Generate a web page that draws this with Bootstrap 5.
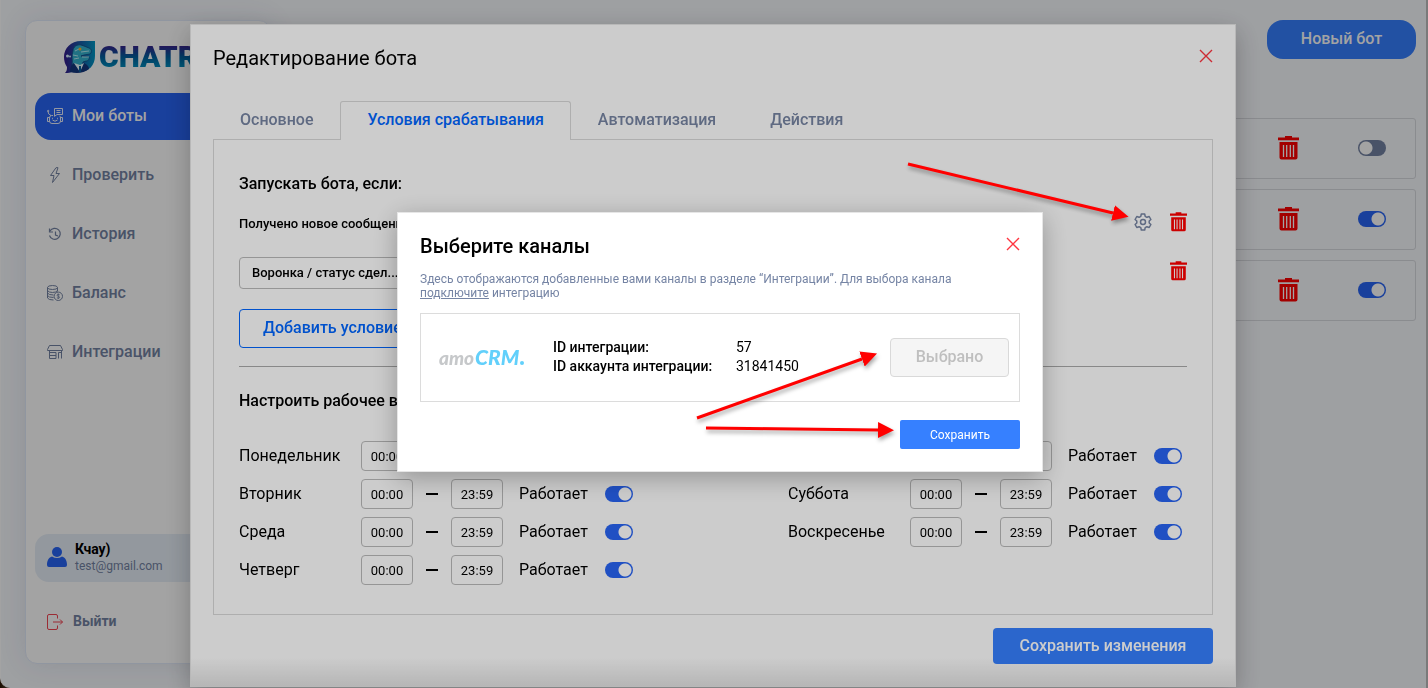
<!DOCTYPE html>
<html lang="ru">
<head>
<meta charset="utf-8">
<meta name="viewport" content="width=device-width, initial-scale=1">
<title>Редактирование бота</title>
<link rel="stylesheet" href="https://cdn.jsdelivr.net/npm/bootstrap@5.3.0/dist/css/bootstrap.min.css">
<style>
:root{--accent:#3680ff;--strong:#0066ff;--navy:#2864f4;--muted:#7483a3;--danger:#ff3540}
body{font-family:Roboto,"Liberation Sans",sans-serif;color:#000;background:#c0c0c0;overflow:hidden}
.shell{min-height:100vh;margin-right:2px;background:#f8fafe;position:relative;border-bottom-left-radius:10px;border-left:1px solid #fff;padding:20px 10px 24px 24px}
.frame-corner{background:linear-gradient(90deg,#2a1400,#c0c0c0 30px)}
.side{width:246px;min-height:644px;background:#fff;border:1px solid #e3ebfa;border-radius:12px;padding:0 9px;box-shadow:0 0 28px rgba(60,80,120,.12)}
.brand{height:72px;padding-left:28px;gap:3px}
.brand-name{font-weight:900;font-size:30px;line-height:34px;background:linear-gradient(#3a1f8c 15%,#00609f 50%,#0099c4 90%);-webkit-background-clip:text;background-clip:text;color:transparent}
.side-link{display:flex;align-items:center;gap:9px;height:47px;padding:0 12px 2px;border-radius:16px;color:var(--muted);font-weight:500;text-decoration:none}
.side-link svg,.leave svg{width:16px;height:16px;flex:none}
.side-link.active{background:var(--navy);color:#fff}
.side-nav{gap:12px}
.user-box{height:48px;border-radius:14px;background:#e7eff8;padding:0 12px 2px;gap:8px}
.user-name{font-size:14px;line-height:18px;font-weight:700}
.user-mail{font-size:12px;line-height:16px;color:var(--muted)}
.leave{height:47px;padding:0 12px;margin:16px 0 18px;gap:10px;font-size:14px;font-weight:700;color:var(--muted);text-decoration:none}
.new-bot{height:39px;width:149px;border-radius:16px;background:var(--accent);color:#fff;font-weight:500;padding:0 0 2px}
.bot-list{gap:10px;margin-top:59px}
.bot-row{height:61px;border:1px solid #d9dbe0;border-radius:3px;padding:0 29px 2px;gap:59px}
.veil{position:fixed;inset:0;background:rgba(0,0,0,.2)}
.win{background:#fff;border:1px solid #e6e6e6;padding:21px 22px 22px}
.win-edit{width:1046px;margin-top:24px;background:linear-gradient(to top,#e4e4e4,#fff 28px);box-shadow:0 8px 24px rgba(0,0,0,.25)}
.win-pick{width:646px;box-shadow:0 6px 24px rgba(0,0,0,.28)}
.veil-edit{padding-right:2px}
.veil-pick{padding:0 0 4px 12px}
.win-title{font-size:20px;line-height:24px;margin:0;font-weight:400}
.win-title.strong,.sub{font-weight:500}
.x-btn{border:0;background:none;padding:3px 0 0;line-height:0;color:var(--danger)}
.tabs{margin-top:31px}
.tab{border:1px solid transparent;border-bottom:0;background:none;height:39px;padding:0 26px 2px;font-weight:500;color:#7785a3;border-radius:3px 3px 0 0}
.tab.active{border-color:#dadada;color:var(--strong);background:#fff;position:relative}
.pane{border:1px solid #dadada;margin-top:-1px;padding:32px 25px 29px}
.sub{font-size:16px;line-height:24px;margin:0}
.cond{height:32px;margin-top:12px;font-size:13px;font-weight:500}
.cond-next{margin-top:17px}
.tools{gap:18px}
.pick{height:32px;width:190px;border:1px solid #bbb;border-radius:4px;background:#fff;padding:0 12px;appearance:none;font-size:13px;font-weight:500;color:#000}
.ico-btn{border:0;background:none;padding:0;line-height:0;color:#f00}
.pane .ico-btn{padding-bottom:4px}
.add-btn{height:39px;width:190px;margin-top:20px;border:1px solid var(--strong);border-radius:4px;background:#fff;color:var(--strong);font-weight:500;padding:0 23px 2px;white-space:nowrap;text-align:left}
.split{border:0;border-top:1px solid #aaa;margin:18px 0 22px;opacity:1;background:none}
.days{display:grid;grid-template-columns:1fr 399px;margin-top:28px}
.day{display:flex;align-items:center;height:30px;margin-bottom:8px}
.day:last-child{margin-bottom:0}
.day label.name{width:122px;line-height:24px}
.time{width:52px;height:30px;border:1px solid #bbb;border-radius:4px;text-align:center;font-size:13px;padding:0;background:#fff;color:#000}
.dash{width:12px;height:2px;background:#000;margin:0 13px}
.works{width:86px;margin-left:16px;line-height:24px}
.tgl{appearance:none;width:28px;height:16px;border-radius:8px;margin:0;flex:none;background:radial-gradient(circle at 20px 8px,#fff 6px,transparent 7px) var(--navy)}
.tgl:not(:checked){background:radial-gradient(circle at 8px 8px,#fff 6px,transparent 7px) var(--muted)}
.save-all{height:36px;width:220px;margin-top:13px;background:var(--accent);color:#fff;font-weight:500;border-radius:4px;padding:0}
.hint{font-size:12px;line-height:14px;color:#7584a4;margin:14px 0 13px}
.hint a{color:inherit}
.channel{border:1px solid #dcdcdc;height:89px;padding:0 10px 0 18px}
.amo{width:114px;height:36px;flex:none}
.amo text{font-family:Lato,sans-serif;font-weight:900;font-style:italic}
.ids{display:grid;grid-template-columns:183px auto;font-size:14px;line-height:19px;margin:0;padding-bottom:2px}
.ids dt{font-weight:500}
.ids dd{margin:0}
.chosen{width:119px;height:39px;border:1px solid #d9d9d9;border-radius:4px;background:#f5f5f5;color:#bfbfbf;font-weight:500;padding:0 0 2px}
.save-pick{width:120px;height:29px;margin-top:18px;border:0;border-radius:2px;background:var(--accent);color:#fff;font-size:12px;padding:0}
.notes{position:fixed;inset:0;width:100%;height:100%;pointer-events:none;filter:drop-shadow(1px 3px 2px rgba(0,0,0,.35))}
</style>
</head>
<body>
<svg width="0" height="0" class="position-absolute">
<defs>
<symbol id="trash" viewBox="0 0 21 24"><path fill="currentColor" d="M7 0h7v1.500h7v2.800H0V1.500h7zM1.500 6h18v15.500a2 2 0 0 1-2 2h-14a2 2 0 0 1-2-2z"/><path d="M5.500 9v12M8.700 9v12M12.300 9v12M15.500 9v12" stroke="#fff" stroke-width="1.300"/></symbol>
<symbol id="cross" viewBox="0 0 14 14"><path d="M1 1l12 12M13 1L1 13" stroke="currentColor" stroke-width="1.400" fill="none"/></symbol>
</defs>
</svg>
<div class="frame-corner">
<div class="shell d-flex justify-content-between align-items-start">
<aside class="side d-flex flex-column">
<div class="brand d-flex align-items-center">
<svg width="33" height="34" viewBox="0 0 33 34"><defs><linearGradient id="lg" x1="0" x2="1"><stop offset="0" stop-color="#351a8c"/><stop offset="1" stop-color="#0098c6"/></linearGradient></defs><path fill="url(#lg)" d="M18 1h14v15c0 9-6 16-16 16-3 0-5 0-6-1-2 2-5 2-8 2 2-2 2-4 2-6C2 24 1 21 1 17 1 8 8 1 18 1z"/><path fill="#35b3d0" stroke="#144a86" stroke-width=".8" d="M10 11c0-4 4-7 8-6l3 1 5 2c3 1 3 4 1 6l-6 1-3 1 8 1c1 2-1 4-3 4l-3 1-1 4H9c1-5-1-10 1-15z"/><path d="M12 11l4-2M10 15l5 1M11 19l5-1M18 12l8-1M19 17h7" stroke="#b5eef5" stroke-width="1"/><circle cx="17" cy="9" r="1.500" fill="#ffb52b"/><path fill="#15377f" d="M7 32c0-5 2-8 4-9l6 9 4-9c4 2 5 4 5 6-5 4-12 5-19 3z"/><path fill="#e9fbff" d="M11 23l6 9 4-9-4 2z"/><path d="M17 26v6" stroke="#075f9c" stroke-width="2"/><circle cx="4.500" cy="16" r="1.500" fill="#d9f4ff"/><circle cx="7" cy="16.500" r="1" fill="#d9f4ff"/></svg>
<span class="brand-name">CHATR</span>
</div>
<nav class="side-nav d-flex flex-column">
<a class="side-link active" href="#"><svg viewBox="0 0 16 16" fill="none" stroke="currentColor" stroke-width=".9"><path d="M7.500 6V.5h8v6H10L7.500 8.300zM9.500 2.500h4M9.500 4.500h4M6 7.500H4.500q-2 0-2 2.500v3q0 2.500 2.500 2.500h6q2.500 0 2.500-2.500v-3q0-1.500-1-2.200M2.500 9.500h-2v4h2M13.500 9.500h2v4h-2M1 3.500q0 3 3 4M5.500 12q2.500 2.500 5 0M5.500 9.800v1M10.500 9.800v1"/><circle cx="1.200" cy="3" r=".7"/></svg>Мои боты</a>
<a class="side-link" href="#"><svg viewBox="0 0 16 16" fill="none" stroke="currentColor" stroke-linejoin="round"><path d="M9 .7L3.500 8.500H7l-1.500 7L12.500 6.500H9L11 .7z"/></svg>Проверить</a>
<a class="side-link" href="#"><svg viewBox="0 0 16 16" fill="none" stroke="currentColor" stroke-width="1.200"><path d="M3 5a5.500 5.500 0 1 1-.5 4.500M2.500 2.500V6H6M8.500 5.500V9l2.500 1"/></svg>История</a>
<a class="side-link" href="#"><svg viewBox="0 0 16 16" fill="none" stroke="currentColor"><ellipse cx="5.500" cy="2.500" rx="5" ry="2"/><path d="M.5 2.500v10.500q1 2 6 2M10.500 2.500v4M.5 5.500q1 2 5 2t5-2M.5 8q1 2 6 2M.5 10.500q1 2 6 2"/><circle cx="11.300" cy="11.300" r="4.200"/><path d="M12.700 9.800q-2.500-1.300-2.700.3 0 .8 1.300 1.200 1.500.4 1.300 1.300-.4 1.300-2.700.2M11.300 8.500v5.500" stroke-width=".8"/></svg>Баланс</a>
<a class="side-link" href="#"><svg viewBox="0 0 16 16" fill="none" stroke="currentColor"><path d="M2.500 1.500h11l2 4v1H.5v-1zM2.500 7v7.500H9V8.500H2.500M14.500 7v7.500M11.500 14.500v-6h3M2.500 11.500H9"/></svg>Интеграции</a>
</nav>
<div class="mt-auto">
<div class="user-box d-flex align-items-center">
<svg width="20" height="20" viewBox="0 0 20 20" fill="#2864f4"><circle cx="10" cy="5" r="5"/><path d="M0 18c0-5 2-7.500 5-8.500q5 3 10 0c3 1 5 3.500 5 8.500q0 2-2 2H2q-2 0-2-2z"/></svg>
<div><div class="user-name">Кчау)</div><div class="user-mail">test@gmail.com</div></div>
</div>
<a class="leave d-flex align-items-center" href="#"><svg viewBox="0 0 16 16" fill="none" stroke="#f34553"><path d="M10.500 4.500V2q0-1.500-1.500-1.500H2Q.5.500.5 2v12q0 1.500 1.500 1.500h7q1.500 0 1.500-1.500v-2.500M6 8h9.500M13 5.500L15.500 8 13 10.500"/></svg>Выйти</a>
</div>
</aside>
<main class="d-flex flex-column align-items-end flex-grow-1 ps-4">
<button type="button" class="btn new-bot">Новый бот</button>
<div class="bot-list w-100 d-flex flex-column">
<div class="bot-row d-flex align-items-center justify-content-end"><button type="button" class="ico-btn" aria-label="Удалить"><svg width="21" height="24"><use href="#trash"/></svg></button><input type="checkbox" class="tgl" aria-label="Бот 1"></div>
<div class="bot-row d-flex align-items-center justify-content-end"><button type="button" class="ico-btn" aria-label="Удалить"><svg width="21" height="24"><use href="#trash"/></svg></button><input type="checkbox" class="tgl" aria-label="Бот 2" checked></div>
<div class="bot-row d-flex align-items-center justify-content-end"><button type="button" class="ico-btn" aria-label="Удалить"><svg width="21" height="24"><use href="#trash"/></svg></button><input type="checkbox" class="tgl" aria-label="Бот 3" checked></div>
</div>
</main>
</div>
</div>

<div class="veil veil-edit d-flex justify-content-center align-items-start">
<section class="win win-edit" role="dialog" aria-label="Редактирование бота">
<header class="d-flex justify-content-between align-items-start">
<h1 class="win-title">Редактирование бота</h1>
<button type="button" class="x-btn" aria-label="Закрыть"><svg width="14" height="14"><use href="#cross"/></svg></button>
</header>
<div class="tabs d-flex" role="tablist">
<button type="button" role="tab" class="tab">Основное</button>
<button type="button" role="tab" class="tab active">Условия срабатывания</button>
<button type="button" role="tab" class="tab">Автоматизация</button>
<button type="button" role="tab" class="tab">Действия</button>
</div>
<div class="pane">
<h2 class="sub">Запускать бота, если:</h2>
<div class="cond d-flex align-items-center justify-content-between">
<span>Получено новое сообщение</span>
<span class="tools d-flex align-items-center">
<button type="button" class="ico-btn" aria-label="Настройки"><svg width="18" height="18" viewBox="0 0 18 18" fill="none" stroke="#7785a3" stroke-width="1.500" stroke-linejoin="round"><path d="M7.300 1h3.400l.5 2.300 1.700 1 2.300-.8 1.700 3-1.700 1.500v2l1.700 1.500-1.700 3-2.300-.8-1.700 1-.5 2.300H7.300l-.5-2.300-1.700-1-2.300.8-1.700-3L2.800 10V8L1.100 6.500l1.700-3 2.300.8 1.700-1z"/><circle cx="9" cy="9" r="2.500"/></svg></button>
<button type="button" class="ico-btn" aria-label="Удалить"><svg width="17" height="20"><use href="#trash"/></svg></button>
</span>
</div>
<div class="cond-next d-flex align-items-center justify-content-between">
<select class="pick" aria-label="Условие"><option>Воронка / статус сдел...</option></select>
<button type="button" class="ico-btn" aria-label="Удалить"><svg width="17" height="20"><use href="#trash"/></svg></button>
</div>
<button type="button" class="add-btn">Добавить условие</button>
<hr class="split">
<h2 class="sub">Настроить рабочее время:</h2>
<div class="days" id="days"></div>
</div>
<div class="d-flex justify-content-end"><button type="button" class="btn save-all">Сохранить изменения</button></div>
</section>
</div>

<div class="veil veil-pick d-flex justify-content-center align-items-center">
<section class="win win-pick" role="dialog" aria-label="Выберите каналы">
<header class="d-flex justify-content-between align-items-start">
<h2 class="win-title strong">Выберите каналы</h2>
<button type="button" class="x-btn" aria-label="Закрыть"><svg width="14" height="14"><use href="#cross"/></svg></button>
</header>
<p class="hint">Здесь отображаются добавленные вами каналы в разделе “Интеграции”. Для выбора канала<br><a href="#">подключите</a> интеграцию</p>
<div class="channel d-flex align-items-center">
<svg class="amo" viewBox="0 0 114 36" role="img" aria-label="amoCRM"><text x="0" y="25" font-size="19" fill="#c6c8ca">amo</text><text x="36" y="25" font-size="21" fill="#62d0fb">CRM</text><circle cx="83" cy="23" r="2" fill="#62d0fb"/></svg>
<dl class="ids"><dt>ID интеграции:</dt><dd>57</dd><dt>ID аккаунта интеграции:</dt><dd>31841450</dd></dl>
<button type="button" class="chosen ms-auto" disabled>Выбрано</button>
</div>
<div class="d-flex justify-content-end"><button type="button" class="save-pick">Сохранить</button></div>
</section>
</div>

<svg class="notes" aria-hidden="true"><defs><marker id="tip" viewBox="0 0 16 16" refX="0" refY="8" markerWidth="16" markerHeight="16" markerUnits="userSpaceOnUse" orient="auto"><path d="M0 0l16 8-16 8z" fill="#f00"/></marker></defs>
<g stroke="#f00" stroke-width="3"><path d="M908 164L1113 213" marker-end="url(#tip)"/><path d="M697 418L862 359" marker-end="url(#tip)"/><path d="M706 428L878 430" marker-end="url(#tip)"/></g></svg>

<script>
const columns=[['Понедельник','Вторник','Среда','Четверг'],['Пятница','Суббота','Воскресенье']];
document.getElementById('days').innerHTML=columns.map((list,c)=>'<div>'+list.map((name,i)=>{
  const id='d'+c+i;
  return `<div class="day"><label class="name" for="${id}a">${name}</label><input class="time" id="${id}a" value="00:00"><span class="dash"></span><input class="time" value="23:59" aria-label="${name}, до"><label class="works" for="${id}w">Работает</label><input type="checkbox" class="tgl" id="${id}w" checked></div>`;
}).join('')+'</div>').join('');
</script>
<script src="https://cdn.jsdelivr.net/npm/bootstrap@5.3.0/dist/js/bootstrap.bundle.min.js"></script>
</body>
</html>
